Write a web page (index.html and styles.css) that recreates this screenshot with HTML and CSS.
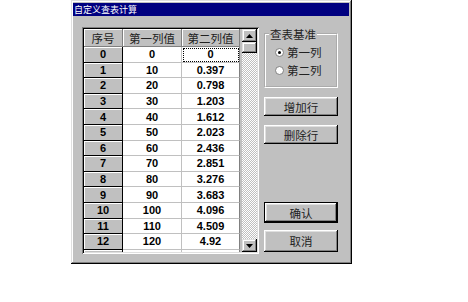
FILE: index.html
```html
<!DOCTYPE html>
<html lang="zh-CN">
<head>
    <meta charset="UTF-8">
    <title>自定义查表计算</title>
    <link rel="stylesheet" href="styles.css">
</head>
<body>
    <div class="dialog">
        <div class="titlebar">自定义查表计算</div>
        <div class="content">
            <div class="gridbox">
                <div class="sheet">
                    <div class="hd">序号</div><div class="hd">第一列值</div><div class="hd">第二列值</div>
                    <div class="no">0</div><div class="val">0</div><div class="val last focus">0</div>
                    <div class="no">1</div><div class="val">10</div><div class="val last">0.397</div>
                    <div class="no">2</div><div class="val">20</div><div class="val last">0.798</div>
                    <div class="no">3</div><div class="val">30</div><div class="val last">1.203</div>
                    <div class="no">4</div><div class="val">40</div><div class="val last">1.612</div>
                    <div class="no">5</div><div class="val">50</div><div class="val last">2.023</div>
                    <div class="no">6</div><div class="val">60</div><div class="val last">2.436</div>
                    <div class="no">7</div><div class="val">70</div><div class="val last">2.851</div>
                    <div class="no">8</div><div class="val">80</div><div class="val last">3.276</div>
                    <div class="no">9</div><div class="val">90</div><div class="val last">3.683</div>
                    <div class="no">10</div><div class="val">100</div><div class="val last">4.096</div>
                    <div class="no">11</div><div class="val">110</div><div class="val last">4.509</div>
                    <div class="no">12</div><div class="val">120</div><div class="val last">4.92</div>
                    <div class="no"></div><div class="val"></div><div class="val last"></div>
                </div>
                <div class="scrollbar">
                    <div class="sb-btn">
                        <svg width="7" height="4" viewBox="0 0 7 4"><path d="M3.5 0 L7 4 L0 4 Z" fill="#000"/></svg>
                    </div>
                    <div class="sb-thumb"></div>
                    <div class="sb-track"></div>
                    <div class="sb-btn">
                        <svg width="7" height="4" viewBox="0 0 7 4"><path d="M0 0 L7 0 L3.5 4 Z" fill="#000"/></svg>
                    </div>
                </div>
            </div>

            <div class="panel">
                <fieldset class="group">
                    <legend>查表基准</legend>
                    <label class="radio"><span class="dot checked"></span>第一列</label>
                    <label class="radio"><span class="dot"></span>第二列</label>
                </fieldset>
                <button class="btn first">增加行</button>
                <button class="btn">删除行</button>
                <button class="btn default">确认</button>
                <button class="btn cancel">取消</button>
            </div>
        </div>
    </div>
</body>
</html>
```

FILE: styles.css
```css
body {
    margin: 0;
    padding: 0;
    background-color: #fff;
    font-family: 'Noto Sans CJK SC', sans-serif;
    color: #000;
}

.dialog {
    margin-left: 71px;
    width: 281px;
    height: 264px;
    box-sizing: border-box;
    padding: 3px 3px 0 2px;
    background-color: #c0c0c0;
    box-shadow: inset -1px -1px #000, inset 1px 1px #dfdfdf,
                inset -2px -2px #808080, inset 2px 2px #fff;
}

.titlebar {
    height: 13px;
    line-height: 13px;
    padding-left: 1px;
    background-color: #000080;
    color: #fff;
    font-size: 9px;
}

.content {
    display: flex;
    gap: 5px;
    padding: 11px 0 0 9px;
}

/* table with scrollbar */
.gridbox {
    display: flex;
    gap: 2px;
    width: 177px;
    height: 227px;
    box-sizing: border-box;
    padding: 2px;
    box-shadow: inset 1px 1px #808080, inset -1px -1px #fff,
                inset 2px 2px #000, inset -2px -2px #dfdfdf;
}

.sheet {
    display: grid;
    grid-template-columns: 39px 59px 58px;
    grid-template-rows: 18px;
    grid-auto-rows: 15.6px;
    width: 156px;
    overflow: hidden;
    font-family: 'Liberation Sans', sans-serif;
    font-size: 11px;
    font-weight: bold;
}

.sheet div {
    box-sizing: border-box;
    display: flex;
    align-items: center;
    justify-content: center;
}

.hd {
    background-color: #c0c0c0;
    border-right: 1px solid #808080;
    border-bottom: 1px solid #808080;
    box-shadow: inset 1px 1px #fff;
    font-family: 'Noto Sans CJK SC', sans-serif;
    font-weight: normal;
    font-size: 11.5px;
    color: #222;
    padding-top: 1px;
}

.no {
    background-color: #c0c0c0;
    border-right: 1px solid #000;
    border-bottom: 1px solid #000;
    box-shadow: inset 1px 1px #fff;
}

.val {
    background-color: #fff;
    border-right: 1px solid #c0c0c0;
    border-bottom: 1px solid #c0c0c0;
}

.val.last {
    border-right-color: #808080;
}

.val.focus {
    outline: 1px dotted #000;
    outline-offset: -2px;
}

.scrollbar {
    display: flex;
    flex-direction: column;
    width: 15px;
}

.sb-btn, .sb-thumb {
    background-color: #c0c0c0;
    box-shadow: inset -1px -1px #000, inset 1px 1px #dfdfdf,
                inset -2px -2px #808080, inset 2px 2px #fff;
}

.sb-btn {
    height: 13px;
    display: flex;
    align-items: center;
    justify-content: center;
}

.sb-thumb {
    height: 11px;
}

.sb-track {
    flex: 1;
    background: repeating-conic-gradient(#fff 0 25%, #c0c0c0 0 50%) 0 0 / 2px 2px;
}

/* right side */
.panel {
    display: flex;
    flex-direction: column;
    width: 74px;
    height: 227px;
}

.group {
    margin: 0;
    padding: 2px 0 7px 9px;
    border: 2px groove #fff;
    min-width: 0;
}

.group legend {
    margin-left: -6px;
    padding: 0 1px;
    font-size: 11.5px;
    line-height: 14px;
    color: #222;
}

.radio {
    display: flex;
    align-items: center;
    gap: 3px;
    height: 18px;
    font-size: 11.5px;
    color: #222;
}

.dot {
    width: 9px;
    height: 9px;
    box-sizing: border-box;
    border-radius: 50%;
    background-color: #fff;
    border: 1px solid #808080;
    display: flex;
    align-items: center;
    justify-content: center;
}

.dot.checked::after {
    content: "";
    width: 3px;
    height: 3px;
    border-radius: 50%;
    background-color: #000;
}

.btn {
    margin-top: 9px;
    height: 19px;
    padding: 0;
    border: none;
    background-color: #c0c0c0;
    font-family: 'Noto Sans CJK SC', sans-serif;
    font-size: 11.5px;
    color: #222;
    box-shadow: inset -1px -1px #000, inset 1px 1px #fff,
                inset -2px -2px #808080, inset 2px 2px #dfdfdf;
}

.btn.default {
    margin-top: auto;
    height: 21px;
    border: 1px solid #000;
}

.btn.cancel {
    margin-top: 7px;
    margin-bottom: 2px;
    height: 22px;
}
```
